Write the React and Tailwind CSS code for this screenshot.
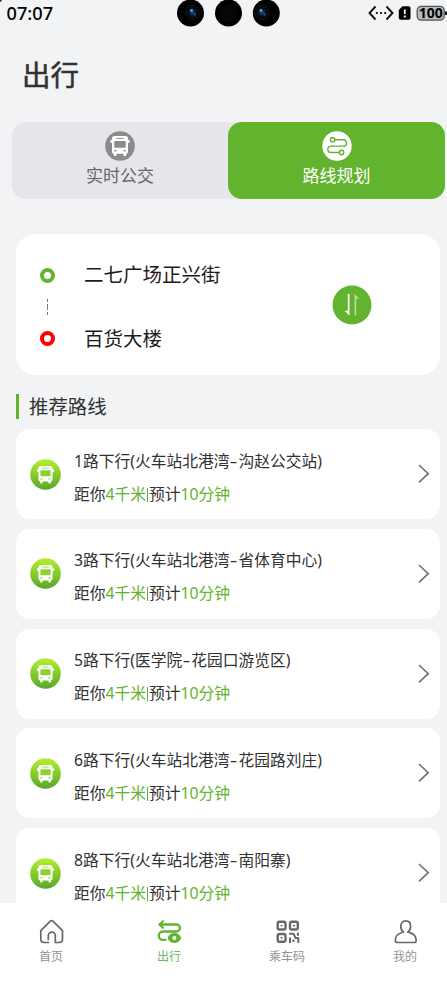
import React, { useState } from 'react';

const routes = [
  { id: 1, name: '1路下行(火车站北港湾', end: '沟赵公交站)' },
  { id: 3, name: '3路下行(火车站北港湾', end: '省体育中心)' },
  { id: 5, name: '5路下行(医学院', end: '花园口游览区)' },
  { id: 6, name: '6路下行(火车站北港湾', end: '花园路刘庄)' },
  { id: 8, name: '8路下行(火车站北港湾', end: '南阳寨)' },
];

function BusShape({ hole }) {
  return (
    <>
      <rect x="7" y="5" width="16" height="17.800" rx="2.600" fill="#fff" />
      <rect x="5.300" y="8.700" width="19.400" height="3.200" rx="1" fill="#fff" />
      <rect x="8.800" y="21" width="2.800" height="4" rx="1" fill="#fff" />
      <rect x="18.400" y="21" width="2.800" height="4" rx="1" fill="#fff" />
      <path d="M11.500 7.500h7" stroke={hole} strokeWidth=".9" strokeLinecap="round" />
      <rect x="9.200" y="9.900" width="11.600" height="6.900" rx="1.200" fill={hole} />
      <path d="M9.300 19.800h2.200M18.500 19.800h2.200" stroke={hole} strokeWidth="1.100" strokeLinecap="round" />
    </>
  );
}

function StatusBar() {
  return (
    <div className="relative flex h-[27px] items-center justify-between">
      <span className="absolute left-0 top-0 h-[2px] w-[2px] rounded-br-full bg-[#444]"></span>
      <span className="w-[177px] pb-[1px] pl-[6.5px] font-['Noto_Sans','Noto_Sans_CJK_SC',sans-serif] text-[18.2px] leading-[26px] font-medium text-black">07:07</span>
      <svg width="104" height="27" viewBox="0 0 104 27">
        <defs>
          <radialGradient id="lens">
            <stop offset="0" stopColor="#1d4f91" />
            <stop offset="0.5" stopColor="#0c2040" />
            <stop offset="1" stopColor="#070809" />
          </radialGradient>
        </defs>
        <circle cx="13.500" cy="13" r="13.500" fill="#000" />
        <circle cx="51.500" cy="13" r="13.500" fill="#000" />
        <circle cx="89.300" cy="13" r="13.500" fill="#000" />
        <circle cx="51.500" cy="13" r="9" fill="#060606" />
        {[15.5, 85].map((x) => (
          <g key={x}>
            <circle cx={x} cy="12.500" r="8" fill="#0a0b0d" />
            <circle cx={x} cy="12.500" r="5" fill="url(#lens)" />
            <circle cx={x - 1} cy="10.500" r="1.400" fill="#5d9ed8" />
            <circle cx={x + 2.5} cy="14.500" r="1" fill="#2e65ac" />
          </g>
        ))}
      </svg>
      <div className="flex w-[166px] items-center justify-end">
        <svg width="80" height="27" viewBox="0 0 80 27">
          <path d="M8.500 6.500 2.500 13l6 6.500M19.500 6.500l6 6.500-6 6.500" fill="none" stroke="#111" strokeWidth="1.900" />
          <path d="M8.900 13h1.800M13.100 13h1.800M17.300 13h1.800" stroke="#111" strokeWidth="1.800" />
          <path d="M35.500 6.300h6.200a1.800 1.800 0 0 1 1.800 1.800V18a1.800 1.800 0 0 1-1.800 1.800h-8.100a1.800 1.800 0 0 1-1.800-1.800V10z" fill="#000" />
          <path d="M37.800 9.500v4.500M37.800 15.500v2" stroke="#fff" strokeWidth="1.800" />
          <rect x="50.200" y="6.300" width="27" height="13.800" rx="4" fill="#b8b9ba" stroke="#555" strokeWidth="1.300" />
          <path d="M79 11.500v3.500" stroke="#111" strokeWidth="2" />
          <text x="63.700" y="18.200" textAnchor="middle" fontSize="14" fontWeight="700" fontFamily="Noto Sans, sans-serif">100</text>
        </svg>
      </div>
    </div>
  );
}

function RouteCard({ name, end }) {
  return (
    <div className="flex h-[90px] shrink-0 items-center rounded-[14px] bg-white pl-[14px] pr-[10.5px]">
      <svg className="mr-[13px] shrink-0" width="31" height="31" viewBox="0 0 31 31">
        <defs>
          <linearGradient id="bus" x1="0" y1="0" x2="0" y2="1">
            <stop offset="0" stopColor="#b4f02f" />
            <stop offset="1" stopColor="#58a62b" />
          </linearGradient>
        </defs>
        <circle cx="15.500" cy="15.500" r="15.300" fill="url(#bus)" />
        <g transform="translate(2.300 2.500) scale(.88)">
          <BusShape hole="#8bd22e" />
        </g>
      </svg>
      <div className="flex-1 whitespace-nowrap pt-[7px] font-['Noto_Sans','Noto_Sans_CJK_SC',sans-serif] text-[15.75px] leading-[33px] text-[#303133]">
        <div>
          {name}
          <span className="inline-block w-[9px] scale-x-150 text-center">-</span>
          {end}
        </div>
        <div>
          距你<span className="text-[#62b32e]">4千米</span>
          <span className="mx-[1px] inline-block h-[14px] w-[1px] bg-[#62b32e] align-[-2px]"></span>
          预计<span className="text-[#62b32e]">10分钟</span>
        </div>
      </div>
      <svg width="12" height="20" viewBox="0 0 12 20" fill="none" stroke="#737373" strokeWidth="1.700" strokeLinecap="round">
        <path d="m1.500 1.500 8.700 8.200-8.700 8.200" />
      </svg>
    </div>
  );
}

const tabs = [
  {
    label: '首页',
    icon: (
      <path d="M9.500 23.500H5a3.200 3.200 0 0 1-3.200-3.200V11.600L11.300 2.200a2 2 0 0 1 2.600 0l9.600 9.400v8.700a3.200 3.200 0 0 1-3.200 3.200h-4v-6.800a3.500 3.500 0 0 0-7 0v3.800" strokeWidth="1.700" />
    ),
  },
  {
    label: '出行',
    icon: (
      <>
        <path d="M4 5.500h15.500a3.500 3.500 0 0 1 0 7H6a4.200 4.200 0 0 0 0 8.400h2.500" strokeWidth="2.300" />
        <path d="M6 2.200 2.300 5.500 6 8.800" strokeWidth="2.200" />
        <path d="M10.500 19c1.400-3.300 3.800-5 6.900-5s5.500 1.700 6.900 5c-1.400 3.300-3.800 5-6.900 5s-5.500-1.700-6.900-5z" fill="currentColor" stroke="none" />
        <circle cx="17.400" cy="19" r="2" fill="#fff" stroke="none" />
      </>
    ),
  },
  {
    label: '乘车码',
    icon: (
      <>
        <rect x="2.700" y="2.700" width="7.800" height="7.800" rx="1.800" strokeWidth="2.400" />
        <rect x="15" y="2.700" width="7.800" height="7.800" rx="1.800" strokeWidth="2.400" />
        <rect x="2.700" y="15" width="7.800" height="7.800" rx="1.800" strokeWidth="2.400" />
        <path d="M5.700 6.600h1.800M18 6.600h1.800M5.700 18.900h1.800" strokeWidth="1.800" strokeLinecap="butt" />
        <path d="M15 18.500v5.600M14 14.700h4.500l2 4.300M20 19h3.300v5M23 13.700v3M18.500 20.500v2.500" strokeWidth="2" strokeLinecap="butt" />
      </>
    ),
  },
  {
    label: '我的',
    icon: (
      <path d="M10.600 13.200C8.700 12 7.800 9.700 7.800 7.300c0-3.400 2-5.500 4.900-5.500s4.900 2.100 4.900 5.500c0 2.400-.9 4.700-2.800 5.900M8.500 13.700c-4 1-6.100 4.200-6.200 7.500 0 1.500.8 2.300 2.200 2.300h16.600c1.400 0 2.200-.8 2.100-2.300-.3-3.800-2.400-6.500-6.700-7.500" strokeWidth="1.700" />
    ),
  },
];

function BottomNav({ active, onChange }) {
  return (
    <nav className="h-[78px] shrink-0 overflow-hidden bg-white">
      <div className="-ml-2 grid w-[472px] grid-cols-4">
        {tabs.map((tab, i) => (
          <button
            key={tab.label}
            onClick={() => onChange(i)}
            className={`flex flex-col items-center pt-[15.5px] text-[12px] leading-[18px] ${active === i ? 'text-[#62b32e]' : 'text-[#686868]'}`}
          >
            <svg width="25" height="25" viewBox="0 0 25 25" fill="none" stroke="currentColor" strokeLinecap="round" strokeLinejoin="round">
              {tab.icon}
            </svg>
            <span className={`mt-[3px] ${active === i ? 'text-[#68b968]' : 'text-[#939393]'}`}>{tab.label}</span>
          </button>
        ))}
      </div>
    </nav>
  );
}

export default function App() {
  const [active, setActive] = useState(1);

  return (
    <div className="flex h-[981px] w-[447px] flex-col overflow-hidden bg-[#f1f3f5] font-['Noto_Sans_CJK_SC','Noto_Sans',sans-serif]">
      <StatusBar />
      <h1 className="ml-[22px] mt-[26px] h-[42px] text-[28.5px] leading-[42px] font-normal text-[#303133] [-webkit-text-stroke:0.5px_#303133]">出行</h1>

      {/* mode switch */}
      <div className="ml-[12px] mt-[27px] flex h-[77px] w-[433px] shrink-0 rounded-[14px] bg-[#e5e5ea]">
        <div className="flex w-[216px] flex-col items-center pt-[9px] text-[17px] leading-[27px] text-[#666]">
          <svg width="30" height="30" viewBox="0 0 30 30">
            <circle cx="15" cy="15" r="14.800" fill="#8b8b8c" />
            <BusShape hole="#8b8b8c" />
          </svg>
          实时公交
        </div>
        <div className="flex w-[217px] flex-col items-center rounded-[14px] bg-[#62b32e] pt-[9px] text-[17px] leading-[27px] text-white">
          <svg width="30" height="30" viewBox="0 0 30 30" fill="none" stroke="#62b32e" strokeWidth="1.400">
            <circle cx="15" cy="15" r="14.700" fill="#fff" stroke="none" />
            <circle cx="10.600" cy="8.700" r="2.200" />
            <circle cx="19.600" cy="21.500" r="2.200" />
            <path d="M12.800 8.700h8.500a3.200 3.200 0 0 1 0 6.400H9a3.200 3.200 0 0 0 0 6.400h8.400" />
          </svg>
          路线规划
        </div>
      </div>

      {/* start and destination */}
      <div className="ml-[16px] mt-[35px] flex h-[141px] w-[424px] shrink-0 items-center rounded-[20px] bg-white">
        <div className="ml-[24px] flex w-[15px] flex-col items-center gap-[16px] pt-[4px]">
          <span className="h-[15px] w-[15px] rounded-full border-4 border-[#62b32e]"></span>
          <svg width="3" height="16" viewBox="0 0 3 16" stroke="#777" strokeWidth="1">
            <path d="M1.500 0v3M1.500 5v6M1.500 13v3" />
          </svg>
          <span className="h-[15px] w-[15px] rounded-full border-4 border-[#f00]"></span>
        </div>
        <div className="ml-[29px] flex flex-1 flex-col gap-[34px] pt-[2px] text-[19.5px] leading-[30px] text-[#1c1c1c]">
          <span>二七广场正兴街</span>
          <span>百货大楼</span>
        </div>
        <svg className="mr-[68.5px]" width="40" height="40" viewBox="0 0 40 40">
          <circle cx="20" cy="20" r="19.500" fill="#62b32e" />
          <path d="M15.800 9h1.700v21.500l-5-4.800h3.300z" fill="#fff" />
          <path d="M24.200 30.500h-1.700V9l5 4.800h-3.300z" fill="#b5dc9c" />
        </svg>
      </div>

      <div className="ml-[15.5px] mt-[17px] flex h-[28px] shrink-0 items-center">
        <span className="h-[25px] w-[3px] bg-[#62b32e]"></span>
        <h2 className="ml-[10.5px] text-[19.4px] leading-[28px] text-[#303133]">推荐路线</h2>
      </div>

      <div className="ml-[16px] mt-[9px] flex min-h-0 w-[424px] flex-1 flex-col gap-[9.8px] overflow-hidden">
        {routes.map((route) => (
          <RouteCard key={route.id} name={route.name} end={route.end} />
        ))}
      </div>

      <BottomNav active={active} onChange={setActive} />
    </div>
  );
}
